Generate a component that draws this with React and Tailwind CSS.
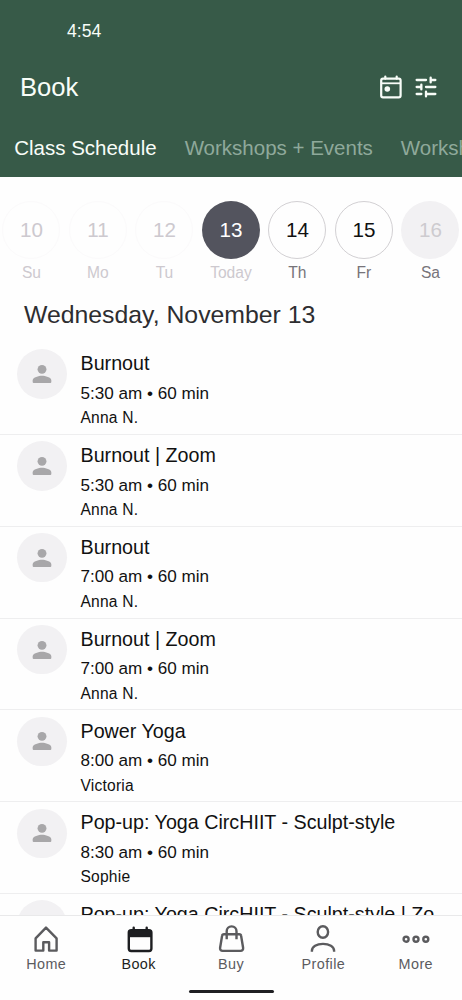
const days = [
  { num: '10', label: 'Su', circle: 'border border-[#fbfafb] text-[#cdc9cf]', text: 'text-[#cdc9cf]' },
  { num: '11', label: 'Mo', circle: 'border border-[#fbfafb] text-[#cdc9cf]', text: 'text-[#cdc9cf]' },
  { num: '12', label: 'Tu', circle: 'border border-[#fbfafb] text-[#cdc9cf]', text: 'text-[#cdc9cf]' },
  { num: '13', label: 'Today', circle: 'bg-[#53545e] text-white', text: 'text-[#cdc9cf]' },
  { num: '14', label: 'Th', circle: 'border border-[#d2d0d3] text-[#111]', text: 'text-[#77747a]' },
  { num: '15', label: 'Fr', circle: 'border border-[#d2d0d3] text-[#111]', text: 'text-[#77747a]' },
  { num: '16', label: 'Sa', circle: 'bg-[#f2f1f3] text-[#cdcbcf]', text: 'text-[#77747a]' },
];

const classes = [
  { title: 'Burnout', time: '5:30 am', teacher: 'Anna N.' },
  { title: 'Burnout | Zoom', time: '5:30 am', teacher: 'Anna N.' },
  { title: 'Burnout', time: '7:00 am', teacher: 'Anna N.' },
  { title: 'Burnout | Zoom', time: '7:00 am', teacher: 'Anna N.' },
  { title: 'Power Yoga', time: '8:00 am', teacher: 'Victoria' },
  { title: 'Pop-up: Yoga CircHIIT - Sculpt-style', time: '8:30 am', teacher: 'Sophie' },
  { title: 'Pop-up: Yoga CircHIIT - Sculpt-style | Zo' },
];

function TodayIcon() {
  return (
    <svg width="24" height="26" viewBox="0 0 24 26" fill="none" stroke="currentColor" strokeWidth="2.2" strokeLinecap="round">
      <rect x="2.2" y="4.6" width="19.4" height="18.8" rx="1.8" />
      <path d="M2.2 9.3h19.4" strokeWidth="1.8" strokeLinecap="butt" />
      <path d="M6.3 2.6v2M17.7 2.6v2" />
      <circle cx="8.3" cy="15" r="2.8" fill="currentColor" stroke="none" />
    </svg>
  );
}

function TuneIcon() {
  return (
    <svg width="28" height="28" viewBox="0 0 24 24" fill="none" stroke="currentColor" strokeWidth="2" strokeLinecap="round">
      <path d="M4 6h8M16 6h4M16 4v4M4 12h4M8 10v4M12 12h8M4 18h4M12 18h8M12 16v4" />
    </svg>
  );
}

function PersonIcon() {
  return (
    <svg width="28" height="28" viewBox="0 0 24 24" fill="#a8a7a9">
      <circle cx="12" cy="8" r="3.8" />
      <path d="M12 13.6c-2.67 0-8 1.24-8 4v1c0 .6.45 1.1 1.1 1.1h13.8c.65 0 1.1-.5 1.1-1.1v-1c0-2.76-5.33-4-8-4z" />
    </svg>
  );
}

function NavIcon({ children }) {
  return (
    <svg width="32" height="32" viewBox="0 0 32 32" fill="none" stroke="currentColor" strokeWidth="2.4" strokeLinecap="round" strokeLinejoin="round">
      {children}
    </svg>
  );
}

const navItems = [
  {
    label: 'Home',
    icon: <path d="M5.6 14.4 16 3.6 26.6 14.4V26.6H19.1V18.3H13.3V26.6H5.6Z" />,
  },
  {
    label: 'Book',
    active: true,
    icon: (
      <>
        <rect x="5.8" y="6.2" width="22.6" height="20.8" rx="2.4" />
        <path d="M5.8 6.2h22.6v7H5.8z" fill="currentColor" stroke="none" />
        <path d="M10.7 3.7v3M23.7 3.7v3" />
      </>
    ),
  },
  {
    label: 'Buy',
    icon: (
      <>
        <path d="M9 10.2h15.2c1 0 1.8.6 1.9 1.5l2 12c.3 1.7-.8 3.2-2.5 3.2h-18c-1.7 0-2.8-1.5-2.5-3.2l2-12c.1-.9.9-1.5 1.9-1.5z" />
        <path d="M11.7 15.2V7.3c0-2.9 2-4.9 4.9-4.9s4.9 2 4.9 4.9v7.9" strokeLinecap="butt" />
      </>
    ),
  },
  {
    label: 'Profile',
    icon: (
      <>
        <ellipse cx="15.9" cy="8" rx="5.2" ry="5.8" />
        <path d="M4.9 27.8v-1C4.9 22.6 9.7 19.9 16 19.9s11.1 2.7 11.1 6.9v1" strokeLinecap="butt" />
      </>
    ),
  },
  {
    label: 'More',
    icon: (
      <>
        <circle cx="6.1" cy="15.2" r="2.5" />
        <circle cx="16" cy="15.2" r="2.5" />
        <circle cx="25.8" cy="15.2" r="2.5" />
      </>
    ),
  },
];

function ClassRow({ item }) {
  return (
    <li className="flex h-[91.85px] shrink-0 border-b border-[#eeeeef]">
      <div className="ml-[17px] mt-[6.3px] flex size-[49.5px] shrink-0 items-center justify-center rounded-full bg-[#f2f1f3]">
        <PersonIcon />
      </div>
      <div className="ml-3.5 pt-[8.2px] whitespace-nowrap text-[#111]">
        <h3 className="text-[19.7px] leading-6">{item.title}</h3>
        {item.time && <p className="mt-[8.5px] text-[17.1px] leading-5">{item.time} • 60 min</p>}
        {item.teacher && <p className="mt-[6.6px] text-[15.6px] leading-4 tracking-[0.2px]">{item.teacher}</p>}
      </div>
    </li>
  );
}

export default function App() {
  return (
    <div className="flex h-[1000px] w-[462px] flex-col overflow-hidden bg-[#fefefe] font-['Liberation_Sans',Arial,sans-serif]">
      <header className="h-[177px] shrink-0 overflow-hidden bg-[#375a48] text-[#f8fdf8]">
        <div className="flex h-[62px] items-center pl-[67px] text-[17.6px]">4:54</div>
        <div className="flex h-[49px] items-center justify-between pl-5 pr-[22px] pt-px">
          <h1 className="text-[25.6px]">Book</h1>
          <div className="flex items-center gap-[9px]">
            <TodayIcon />
            <TuneIcon />
          </div>
        </div>
        <nav className="flex h-[66px] items-center gap-7 pl-[14.2px] pt-[9px] text-[20.5px] whitespace-nowrap text-[#8fa99b]">
          <span className="text-[#f8fdf8]">Class Schedule</span>
          <span>Workshops + Events</span>
          <span>Workshops</span>
        </nav>
      </header>

      {/* Week strip */}
      <div className="-ml-[1.8px] flex shrink-0 pt-[24.4px]">
        {days.map((day) => (
          <div key={day.num} className="flex w-[66.5px] shrink-0 flex-col items-center">
            <div className={`flex size-[58px] items-center justify-center rounded-full text-[20.6px] ${day.circle}`}>
              {day.num}
            </div>
            <div className={`mt-[5px] text-[15.6px] leading-[18px] ${day.text}`}>{day.label}</div>
          </div>
        ))}
      </div>

      <h2 className="mt-[16.6px] h-8 shrink-0 pl-6 text-[24.8px] leading-8 text-[#2d2d30]">Wednesday, November 13</h2>

      <ul className="mt-3 flex min-h-0 flex-1 flex-col overflow-hidden">
        {classes.map((item, idx) => (
          <ClassRow key={idx} item={item} />
        ))}
      </ul>

      <footer className="flex h-[85px] shrink-0 flex-col items-center border-t border-[#e9e9ea]">
        <div className="grid w-full grid-cols-5 pt-2">
          {navItems.map((item) => (
            <div
              key={item.label}
              className={`flex flex-col items-center text-[14.4px] tracking-[0.4px] ${item.active ? 'text-[#1d1e21]' : 'text-[#5b5b5e]'}`}
            >
              <NavIcon>{item.icon}</NavIcon>
              <span className="leading-4">{item.label}</span>
            </div>
          ))}
        </div>
        <div className="mt-[18px] h-[3px] w-[85px] rounded-full bg-[#1f1f22]" />
      </footer>
    </div>
  );
}
